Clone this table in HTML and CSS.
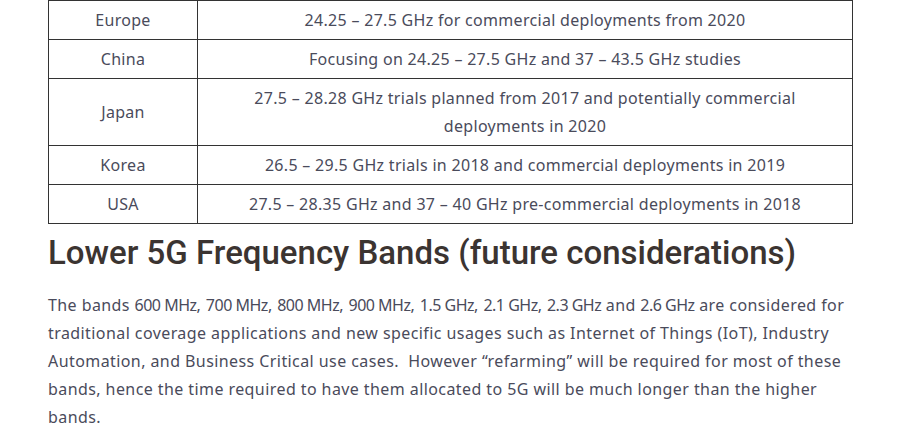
FILE: index.html
```html
<!DOCTYPE html>
<html>
<head>
<meta charset="utf-8">
<link rel="stylesheet" href="styles.css">
</head>
<body>
<div class="content">
  <table class="bands">
    <tr><td class="region">Europe</td><td>24.25 – 27.5 GHz for commercial deployments from 2020</td></tr>
    <tr><td class="region">China</td><td>Focusing on 24.25 – 27.5 GHz and 37 – 43.5 GHz studies</td></tr>
    <tr><td class="region">Japan</td><td>27.5 – 28.28 GHz trials planned from 2017 and potentially commercial<br>deployments in 2020</td></tr>
    <tr><td class="region">Korea</td><td>26.5 – 29.5 GHz trials in 2018 and commercial deployments in 2019</td></tr>
    <tr><td class="region">USA</td><td>27.5 – 28.35 GHz and 37 – 40 GHz pre-commercial deployments in 2018</td></tr>
  </table>
  <h2 class="title">Lower 5G Frequency Bands (future considerations)</h2>
  <p class="text">The bands <span class="freq">600 MHz</span>, <span class="freq">700 MHz</span>, <span class="freq">800 MHz</span>, <span class="freq">900 MHz</span>, <span class="freq">1.5 GHz</span>, <span class="freq">2.1 GHz</span>, <span class="freq">2.3 GHz</span> and <span class="freq">2.6 GHz</span> are considered for<br>traditional coverage applications and new specific usages such as Internet of Things (IoT), Industry<br>Automation, and Business Critical use cases.&nbsp; However “refarming” will be required for most of these<br>bands, hence the time required to have them allocated to 5G will be much longer than the higher<br>bands.</p>
</div>
</body>
</html>
```
FILE: styles.css
```css
html, body { margin: 0; padding: 0; background: #fff; }
.content { width: 805px; margin-left: 48px; font-family: "Noto Sans", "Open Sans", sans-serif; color: #4a4b5b; }
.bands { width: 805px; border-collapse: collapse; font-size: 16px; line-height: 28px; letter-spacing: 0.3px; }
.bands td { border: 1px solid #333; text-align: center; padding: 5px 8px; }
.bands td.region { width: 132px; }
.title { font-family: Roboto, "Noto Sans", sans-serif; font-weight: 500; font-size: 33px; line-height: 40px; color: #3b3431; margin: 9px 0 0 0; }
.text { font-size: 16px; line-height: 28px; letter-spacing: 0.42px; white-space: nowrap; margin: 18px 0 0 0; }
.freq { letter-spacing: -0.5px; }
```
